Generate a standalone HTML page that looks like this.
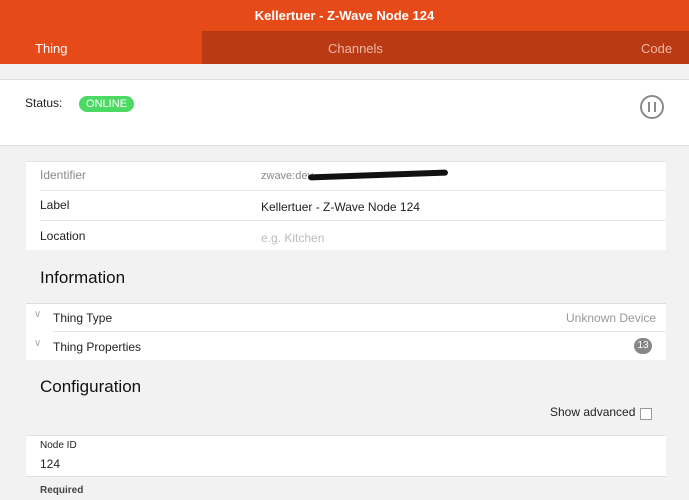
<!DOCTYPE html>
<html><head><style>
*{margin:0;padding:0;box-sizing:border-box}
body{width:689px;height:500px;overflow:hidden;background:#f2f2f2;font-family:"Liberation Sans",sans-serif;position:relative;color:#222}
.a{position:absolute;white-space:nowrap}
</style></head><body>
<div class="a" style="left:0;top:0;width:689px;height:31px;background:#e64a19"></div>
<div class="a" style="left:0;top:8px;width:689px;text-align:center;color:#fff;font-weight:bold;font-size:13px">Kellertuer - Z-Wave Node 124</div>
<div class="a" style="left:0;top:31px;width:202px;height:33px;background:#e64a19"></div>
<div class="a" style="left:202px;top:31px;width:487px;height:33px;background:#b93a15"></div>
<div class="a" style="left:35px;top:41px;color:#fff;font-size:13px">Thing</div>
<div class="a" style="left:328px;top:41px;color:#f0b8a5;font-size:13px">Channels</div>
<div class="a" style="left:641px;top:41px;color:#f0b8a5;font-size:13px">Code</div>

<div class="a" style="left:0;top:79px;width:689px;height:67px;background:#fff;border-top:1px solid #ddd;border-bottom:1px solid #ddd"></div>
<div class="a" style="left:25px;top:96px;font-size:12px">Status:</div>
<div class="a" style="left:79px;top:96px;width:55px;height:16px;border-radius:8px;background:#4cd964;color:#fff;font-size:11px;text-align:center;line-height:16px">ONLINE</div>
<div class="a" style="left:640px;top:95px;width:24px;height:24px;border:2px solid #8a8a8a;border-radius:50%"></div>
<div class="a" style="left:648px;top:102px;width:2px;height:10px;background:#8a8a8a"></div>
<div class="a" style="left:654px;top:102px;width:2px;height:10px;background:#8a8a8a"></div>

<div class="a" style="left:26px;top:161px;width:640px;height:89px;background:#fff;border-top:1px solid #e4e4e4"></div>
<div class="a" style="left:40px;top:190px;width:626px;height:1px;background:#e6e6e6"></div>
<div class="a" style="left:40px;top:220px;width:626px;height:1px;background:#e6e6e6"></div>
<div class="a" style="left:40px;top:168px;font-size:12px;color:#8a8a8a">Identifier</div>
<div class="a" style="left:261px;top:170px;font-size:11px;color:#8a8a8a">zwave:dev</div>
<div class="a" style="left:308px;top:172px;width:140px;height:6px;background:#111;border-radius:3px;transform:rotate(-2deg)"></div>
<div class="a" style="left:40px;top:198px;font-size:12px">Label</div>
<div class="a" style="left:261px;top:200px;font-size:12px">Kellertuer - Z-Wave Node 124</div>
<div class="a" style="left:40px;top:229px;font-size:12px">Location</div>
<div class="a" style="left:261px;top:231px;font-size:12px;color:#bbb">e.g. Kitchen</div>

<div class="a" style="left:40px;top:268px;font-size:17px;color:#111">Information</div>
<div class="a" style="left:26px;top:303px;width:640px;height:57px;background:#fff;border-top:1px solid #ddd"></div>
<div class="a" style="left:53px;top:331px;width:613px;height:1px;background:#e6e6e6"></div>
<div class="a" style="left:34px;top:309px;font-size:10px;color:#aaa">&#8744;</div>
<div class="a" style="left:34px;top:338px;font-size:10px;color:#aaa">&#8744;</div>
<div class="a" style="left:53px;top:311px;font-size:12px">Thing Type</div>
<div class="a" style="left:566px;top:311px;font-size:12px;color:#999">Unknown Device</div>
<div class="a" style="left:53px;top:340px;font-size:12px">Thing Properties</div>
<div class="a" style="left:634px;top:338px;width:18px;height:16px;border-radius:8px;background:#888;color:#fff;font-size:10px;text-align:center;line-height:16px">13</div>

<div class="a" style="left:40px;top:377px;font-size:17px;color:#111">Configuration</div>
<div class="a" style="left:550px;top:405px;font-size:12px">Show advanced</div>
<div class="a" style="left:640px;top:408px;width:12px;height:12px;border:1px solid #999;background:#fff"></div>
<div class="a" style="left:26px;top:435px;width:640px;height:42px;background:#fff;border-top:1px solid #e4e4e4;border-bottom:1px solid #ddd"></div>
<div class="a" style="left:40px;top:440px;font-size:10px">Node ID</div>
<div class="a" style="left:40px;top:457px;font-size:12px">124</div>
<div class="a" style="left:40px;top:485px;font-size:10px;font-weight:bold;color:#444">Required</div>
</body></html>
